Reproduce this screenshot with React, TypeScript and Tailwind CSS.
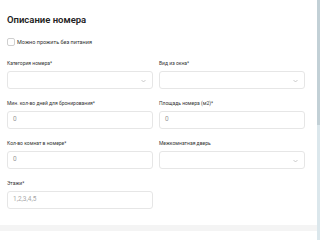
import React from "react";

const Chevron = () => (
  <svg width="5" height="4" viewBox="0 0 5 4" className="absolute right-[6px] top-[7px]">
    <path d="M0.5 1 L2.5 3 L4.5 1" fill="none" stroke="#b5b5b5" strokeWidth="0.7" />
  </svg>
);

const Field = ({ label, value, select, placeholder }: { label: string; value?: string; select?: boolean; placeholder?: boolean }) => (
  <div className="flex flex-col">
    <div className="h-[8px] leading-[8px] text-[5px] text-[#333] mb-[4px] whitespace-nowrap">{label}</div>
    <div className="relative h-[18px] border border-[#e6e6e6] rounded-[3px] bg-white flex items-center pl-[5px]">
      {value !== undefined && (
        <span className={"text-[6.5px] " + (placeholder ? "text-[#a8a8a8]" : "text-[#9a9a9a]")}>{value}</span>
      )}
      {select && <Chevron />}
    </div>
  </div>
);

export default function App() {
  return (
    <div className="w-[320px] h-[240px] bg-white flex overflow-hidden" style={{ fontFamily: "Roboto, 'Noto Sans', sans-serif" }}>
      <div className="w-[317px] h-[240px] flex flex-col">
        <div className="h-[225px] pl-[7px] pt-[14px]">
          <div className="h-[12px] leading-[12px] text-[9.5px] font-semibold text-[#222]">Описание номера</div>
          <div className="flex items-center mt-[12px] h-[8px]">
            <div className="w-[8px] h-[8px] border border-[#cfcfcf] rounded-[2px] bg-white"></div>
            <span className="ml-[2px] text-[5.5px] text-[#333]">Можно прожить без питания</span>
          </div>
          <div className="grid grid-cols-[146px_146px] gap-x-[6px] gap-y-[10px] mt-[13px]">
            <Field label="Категория номера*" select />
            <Field label="Вид из окна*" select />
            <Field label="Мин. кол-во дней для бронирования*" value="0" />
            <Field label="Площадь номера (м2)*" value="0" />
            <Field label="Кол-во комнат в номере*" value="0" />
            <Field label="Межкомнатная дверь" select />
            <Field label="Этажи*" value="1,2,3,4,5" placeholder />
          </div>
        </div>
        <div className="h-[6px] bg-[#f4f4f4]"></div>
        <div className="flex-1 bg-white"></div>
      </div>
      <div className="w-[3px] h-[240px] bg-[#dbe7ec] flex flex-col">
        <div className="h-[125px] bg-[#c2d0d6]"></div>
      </div>
    </div>
  );
}
